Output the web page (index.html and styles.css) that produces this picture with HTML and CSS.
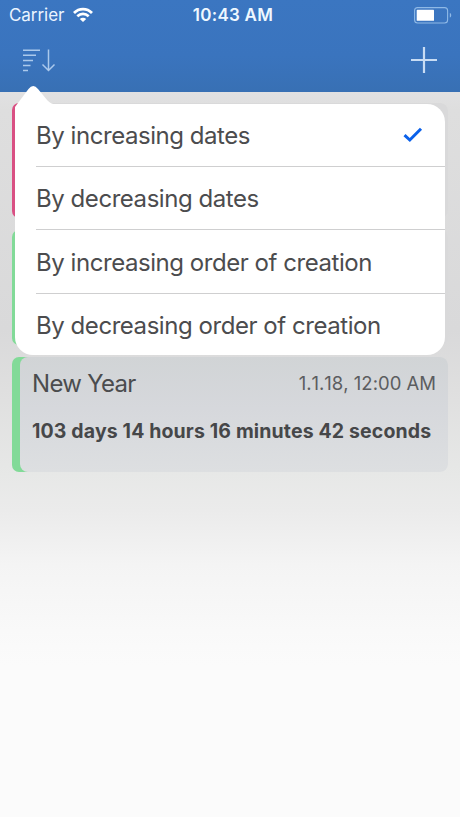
FILE: index.html
```html
<!DOCTYPE html>
<html lang="en">
<head>
<meta charset="utf-8">
<title>Events</title>
<link rel="stylesheet" href="styles.css">
</head>
<body>
<div class="screen">
  <header class="header">
    <div class="status">
      <div class="carrier">
        <span class="carrier-name">Carrier</span>
        <svg class="wifi" width="22" height="16" viewBox="0 0 22 16">
          <path d="M2 5.9C7.1.8 14.9.8 20 5.9" fill="none" stroke="#fff" stroke-width="2.8"/>
          <path d="M5.3 9.3c3.3-3.2 8.1-3.2 11.4 0" fill="none" stroke="#fff" stroke-width="2.6"/>
          <path d="M7.8 12c1.8-1.7 4.6-1.7 6.4 0L11 15.1z" fill="#fff"/>
        </svg>
      </div>
      <span class="clock">10:43 AM</span>
      <svg class="battery" width="38" height="17" viewBox="0 0 38 17">
        <rect x=".6" y=".6" width="33" height="15.4" rx="3" fill="none" stroke="#8fb9e6" stroke-width="1.1"/>
        <rect x="2.7" y="2.8" width="17.3" height="11" rx=".6" fill="#fff"/>
        <path d="M35.8 5.9c1.9.5 1.9 4.2 0 4.7z" fill="#8fb9e6"/>
      </svg>
    </div>
    <nav class="toolbar">
      <svg class="sort" width="34" height="24" viewBox="0 0 34 24" fill="none" stroke="#abc9ec" stroke-width="1.5">
        <path d="M1 2.2h17M1 7.2h13M1 12.4h10M1 17.4h7.5M1 22.4h5"/>
        <path d="M26.5 1.5v21M20.5 16.5l6 6 6-6"/>
      </svg>
      <svg class="add" width="26" height="26" viewBox="0 0 26 26" fill="none" stroke="#c8dcf4" stroke-width="2.2">
        <path d="M0 13h26M13 0v26"/>
      </svg>
    </nav>
  </header>
  <main class="events">
    <article class="event event-pink"><div class="event-body event-faint"></div></article>
    <article class="event"><div class="event-body event-faint"></div></article>
    <article class="event">
      <div class="event-body">
        <div class="event-head">
          <h2 class="event-name">New Year</h2>
          <time class="event-date">1.1.18, 12:00 AM</time>
        </div>
        <p class="event-left">103 days 14 hours 16 minutes 42 seconds</p>
      </div>
    </article>
  </main>
  <div class="popover">
    <svg class="arrow" width="40" height="40" viewBox="0 0 40 40">
      <path d="M0 40V22L13.5 4.1Q18.2-2.3 23 4.1L32.5 15.4Q36 19 40 19V40Z" fill="#fff"/>
    </svg>
    <ul class="menu">
      <li class="item"><span class="label">By increasing dates</span>
        <svg class="check" width="20" height="16" viewBox="0 0 20 16"><path d="M1.5 8.2L6.8 13 18 1.7" fill="none" stroke="#0b61ea" stroke-width="3"/></svg>
      </li>
      <li class="item"><span class="label">By decreasing dates</span></li>
      <li class="item"><span class="label">By increasing order of creation</span></li>
      <li class="item"><span class="label">By decreasing order of creation</span></li>
    </ul>
  </div>
</div>
</body>
</html>
```
FILE: styles.css
```css
* { box-sizing: border-box; }
body { margin: 0; font-family: Inter, "Liberation Sans", sans-serif; color: #4b4c4e; }
.screen {
  position: relative;
  width: 460px;
  height: 817px;
  overflow: hidden;
  background: linear-gradient(#e1e1e2 92px, #dedede 110px, #d9d9da 330px, #dfdfdf 390px, #e7e8e7 475px, #ebebeb 510px, #f4f4f4 565px, #f9f9f9 630px, #fbfbfb 665px, #fbfbfb);
}
.header { height: 92px; background: linear-gradient(#3b76c1, #3a74be 60%, #3870b4); }
.status { height: 30px; padding: 0 8px 0 9px; display: grid; grid-template-columns: 1fr auto 1fr; align-items: center; color: #fff; }
.carrier { display: flex; align-items: center; gap: 8px; }
.carrier-name { font-size: 17px; letter-spacing: -.05px; color: #eaf4ff; }
.clock { font-size: 17px; font-weight: 600; color: #eff8ff; letter-spacing: .25px; padding-left: 5px; }
.battery { justify-self: end; }
.toolbar { height: 60px; padding: 0 23px 0 22px; display: flex; justify-content: space-between; align-items: center; }
.sort, .add { margin-top: -1px; }
.events { padding: 11px 12px 0; display: flex; flex-direction: column; gap: 12px; }
.event { height: 115px; padding-left: 8px; border-radius: 7px; background: #82da98; overflow: hidden; }
.event-pink { background: #d95083; }
.event-body { height: 115px; padding: 11px 12px 0; border-radius: 8px; background: linear-gradient(#d1d4d6, #d6d8dc 45%, #dddfe1); }
.event { background: linear-gradient(90deg, #82da98 20px, transparent 20px); }
.event-pink { background: linear-gradient(90deg, #d95083 20px, transparent 20px); }
.event-faint { background: #d9d9da; }
.event-head { display: flex; justify-content: space-between; align-items: center; height: 31px; }
.event-name { margin: -1px 0 0; font-size: 24px; font-weight: 400; letter-spacing: -.7px; }
.event-date { margin-top: -1px; font-size: 18.5px; font-kerning: none; font-feature-settings: "calt" 0; white-space: nowrap; color: #5c5d60; }
.event-left { margin: 20px 0 0; font-size: 19.5px; line-height: 24px; font-weight: 700; letter-spacing: .14px; white-space: nowrap; color: #464749; }
.popover { position: absolute; left: 15px; top: 104px; width: 430px; }
.arrow { position: absolute; left: 0; top: -19px; }
.menu { margin: 0; padding: 0 0 0 21px; list-style: none; height: 251px; border-radius: 18px; background: #fff; display: grid; grid-template-rows: 63px 63px 64px 61px; }
.item { display: flex; align-items: center; justify-content: space-between; padding-right: 22px; border-bottom: 1px solid #cfcfd0; }
.item:last-child { border-bottom: 0; }
.label { padding-top: 2px; font-size: 24px; line-height: 32px; letter-spacing: -.45px; white-space: nowrap; color: #4c4c4e; }
```
